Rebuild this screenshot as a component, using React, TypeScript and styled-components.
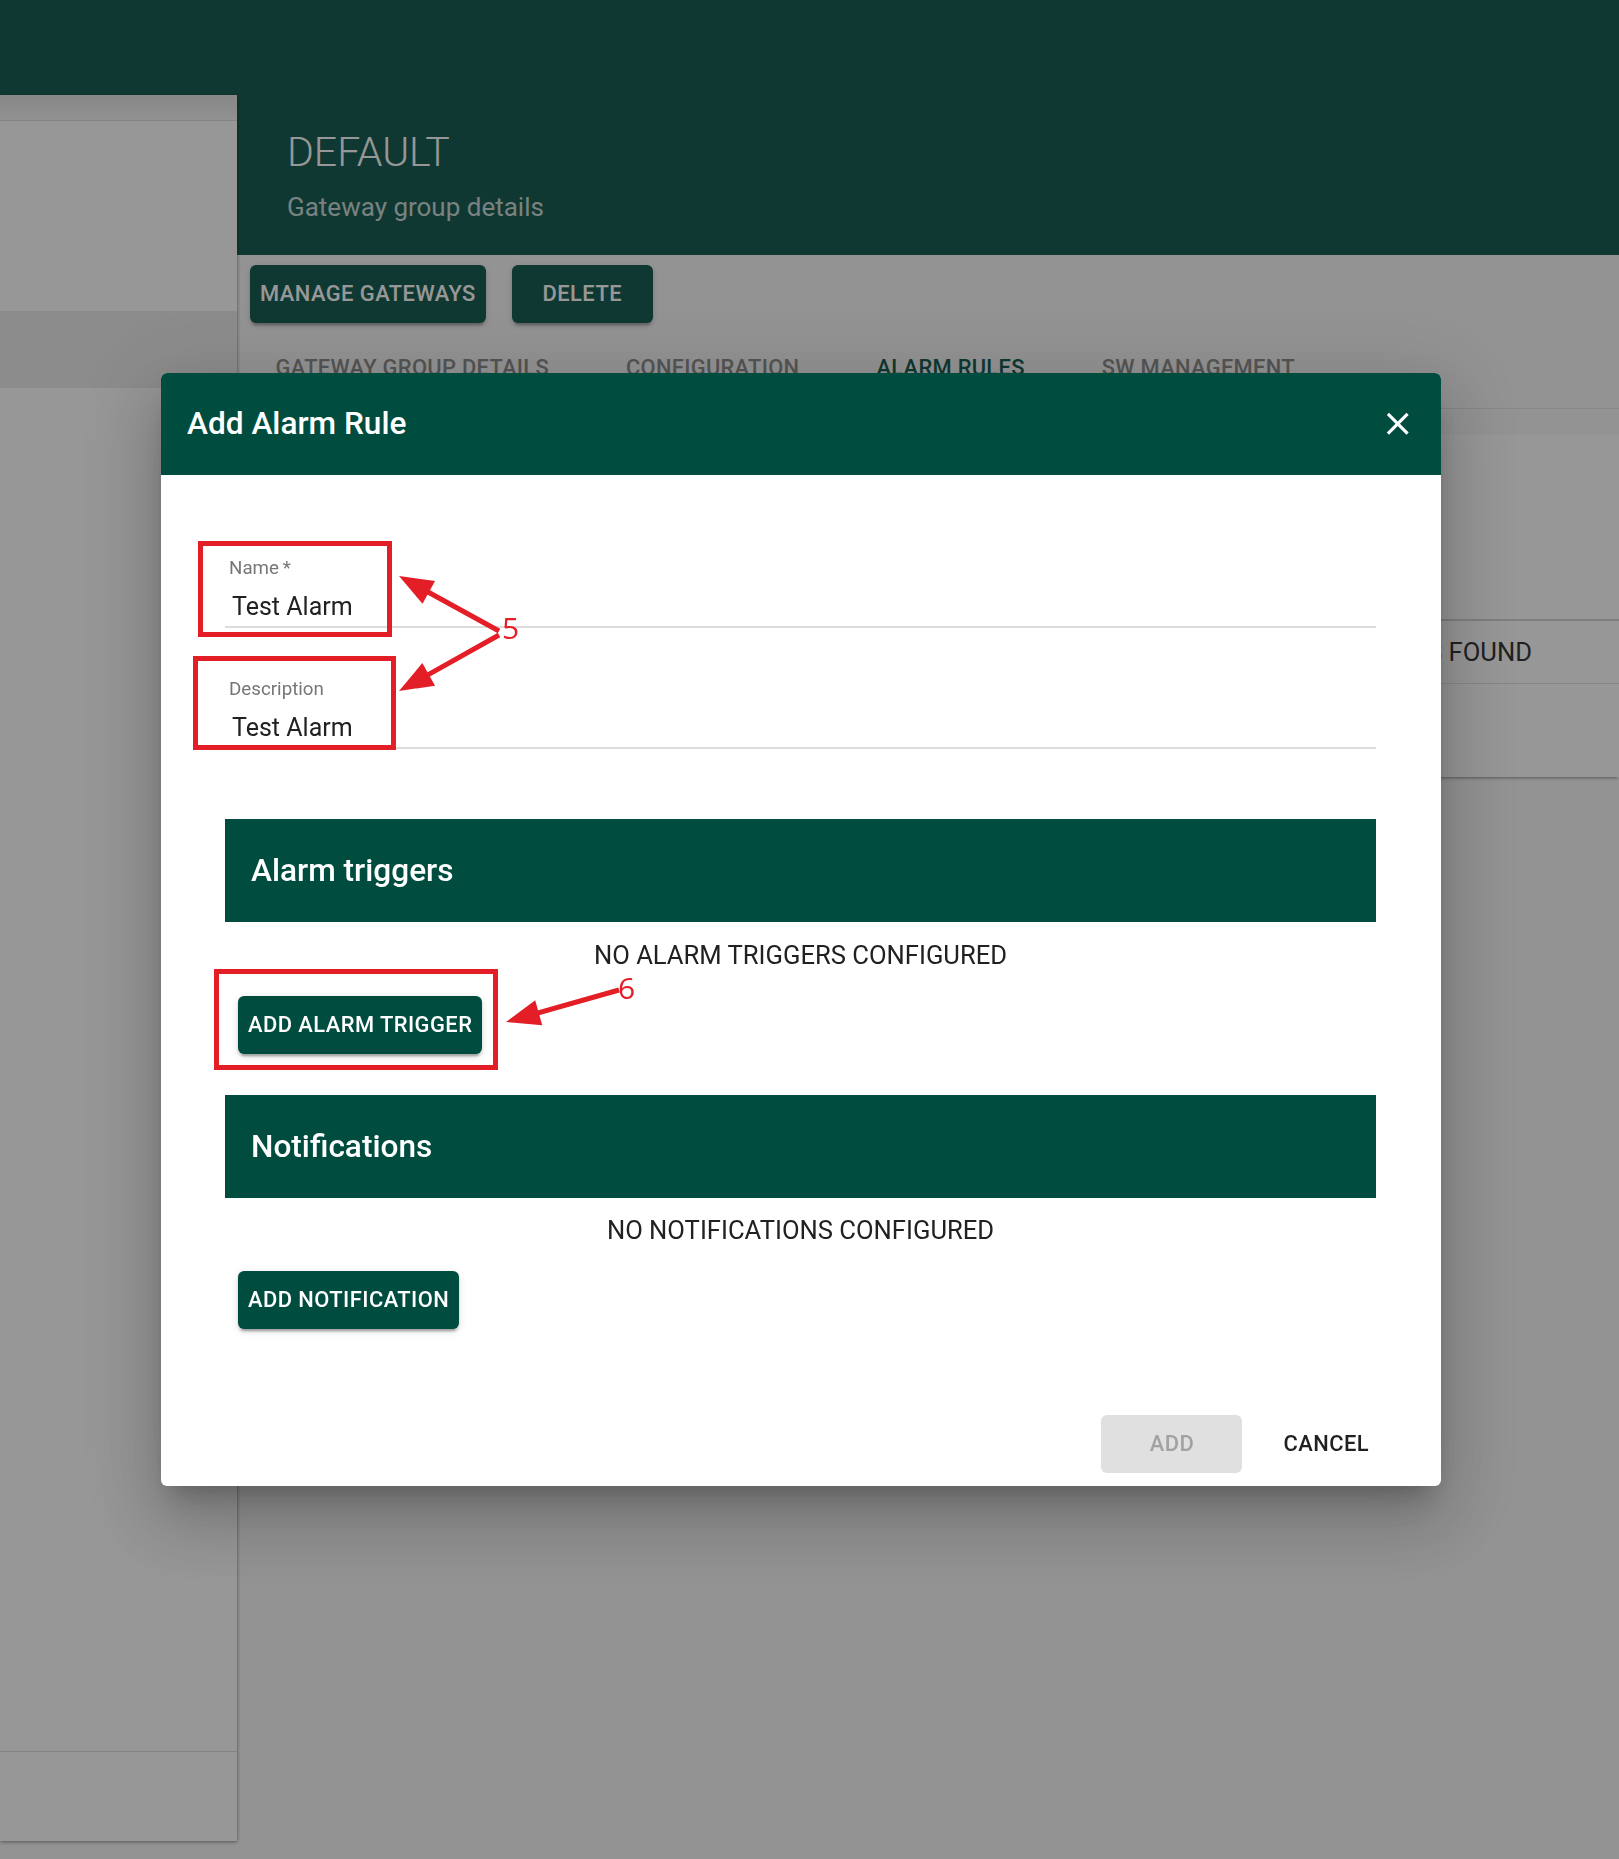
import React from 'react'
import styled, { createGlobalStyle } from 'styled-components'

const GlobalStyle = createGlobalStyle`
  html, body {
    margin: 0;
    padding: 0;
    overflow: hidden;
  }
  body {
    font-family: Roboto, "Liberation Sans", Arial, sans-serif;
    background: #f8f8f8;
    color: #212121;
  }
  * {
    box-sizing: border-box;
  }
`

const GREEN = '#004d40'
const RED = '#e41e26'

const Page = styled.div`
  height: 100vh;
  display: flex;
  flex-direction: column;
`

const AppBar = styled.header`
  height: 95px;
  flex: none;
  background: ${GREEN};
`

const Main = styled.div`
  flex: 1;
  display: flex;
  min-height: 0;
`

const Sidebar = styled.aside`
  width: 237px;
  flex: none;
  height: 1746px;
  background: #fff;
  box-shadow: 1px 0 3px rgba(0, 0, 0, 0.22), 0 2px 3px rgba(0, 0, 0, 0.25);
  display: flex;
  flex-direction: column;
  position: relative;
  z-index: 1;
`

const SideBand = styled.div<{ $h?: number; $tone?: string; $line?: 'top' | 'bottom' }>`
  flex: ${(p) => (p.$h ? 'none' : '1')};
  height: ${(p) => (p.$h ? `${p.$h}px` : 'auto')};
  background: ${(p) => p.$tone || '#fff'};
  ${(p) => (p.$line === 'top' ? 'border-top: 1px solid #d9d9d9;' : '')}
  ${(p) => (p.$line === 'bottom' ? 'border-bottom: 1px solid #dedede;' : '')}
`

const Content = styled.main`
  flex: 1;
  min-width: 0;
  display: flex;
  flex-direction: column;
`

const Hero = styled.div`
  height: 160px;
  background: ${GREEN};
  padding: 32.6px 0 0 50px;
`

const HeroTitle = styled.h1`
  margin: 0;
  font-weight: 300;
  font-size: 41px;
  line-height: 49.2px;
  color: #fff;
`

const HeroSub = styled.p`
  margin: 12.7px 0 0;
  font-size: 26px;
  line-height: 37.5px;
  color: rgba(255, 255, 255, 0.78);
`

const Toolbar = styled.div`
  display: flex;
  gap: 26px;
  padding: 10px 13px 0;
`

const Button = styled.button<{ $kind?: 'contained' | 'disabled' | 'text' }>`
  height: 58px;
  min-width: ${(p) => (p.$kind === 'text' ? '0' : '141px')};
  padding: ${(p) => (p.$kind === 'text' ? '0 25px' : '0 10px')};
  border: 0;
  border-radius: 6px;
  font-family: Roboto, "Liberation Sans", Arial, sans-serif;
  font-weight: 500;
  font-size: 21.9px;
  line-height: 1;
  letter-spacing: 0.45px;
  text-transform: uppercase;
  white-space: nowrap;
  cursor: pointer;
  background: ${(p) =>
    p.$kind === 'disabled' ? '#e0e0e0' : p.$kind === 'text' ? 'transparent' : GREEN};
  color: ${(p) => (p.$kind === 'disabled' ? '#a2a2a2' : p.$kind === 'text' ? '#212121' : '#fff')};
  box-shadow: ${(p) =>
    p.$kind === 'contained' || !p.$kind
      ? '0 5px 2px -3px rgba(0,0,0,0.2), 0 3px 3px 0 rgba(0,0,0,0.14), 0 2px 8px 0 rgba(0,0,0,0.12)'
      : 'none'};
`

const Tabs = styled.nav`
  display: flex;
  height: 75px;
  margin-top: 11px;
  border-bottom: 1px solid #e0e0e0;
`

const Tab = styled.div<{ $active?: boolean }>`
  padding: 18px 38.5px 0;
  font-weight: 500;
  font-size: 21.9px;
  line-height: 32.8px;
  letter-spacing: 0.3px;
  text-transform: uppercase;
  white-space: nowrap;
  color: ${(p) => (p.$active ? GREEN : '#828282')};
  border-bottom: ${(p) => (p.$active ? `3px solid ${GREEN}` : 'none')};
`

const Paper = styled.section`
  margin: 25px 0 0 13px;
  height: 343px;
  background: #fff;
  display: flex;
  flex-direction: column;
  box-shadow: 0 3px 2px -2px rgba(0, 0, 0, 0.3), 0 2px 4px rgba(0, 0, 0, 0.14);
`

const PaperHead = styled.div`
  height: 187px;
  border-bottom: 2px solid #d2d2d2;
`

const EmptyRow = styled.div`
  height: 63px;
  display: flex;
  align-items: center;
  justify-content: flex-end;
  padding-right: 87px;
  font-size: 25.6px;
  color: #212121;
  border-bottom: 1px solid #e0e0e0;
`

/* modal */

const Backdrop = styled.div`
  position: fixed;
  inset: 0;
  background: rgba(33, 33, 33, 0.47);
  display: flex;
  align-items: center;
  justify-content: center;
  padding-right: 17px;
  z-index: 10;
`

const Dialog = styled.div`
  position: relative;
  width: 1280px;
  background: #fff;
  border-radius: 6px;
  display: flex;
  flex-direction: column;
  box-shadow: 0 17px 23px -11px rgba(0, 0, 0, 0.2), 0 37px 59px 5px rgba(0, 0, 0, 0.14),
    0 14px 72px 12px rgba(0, 0, 0, 0.12);
`

const DialogHeader = styled.div`
  height: 102px;
  display: flex;
  align-items: center;
  justify-content: space-between;
  padding: 0 25px 0 26px;
  background: ${GREEN};
  border-radius: 6px 6px 0 0;
`

const DialogTitle = styled.h2`
  margin: 0;
  font-weight: 500;
  font-size: 31.6px;
  line-height: 50px;
  color: #fff;
`

const CloseButton = styled.button`
  width: 37.5px;
  height: 37.5px;
  padding: 0;
  border: 0;
  background: transparent;
  display: flex;
  cursor: pointer;
`

const DialogBody = styled.div`
  padding: 76px 65px 0 64px;
  display: flex;
  flex-direction: column;
`

const Field = styled.label<{ $gap?: number }>`
  display: flex;
  flex-direction: column;
  margin-top: ${(p) => p.$gap || 0}px;
`

const FieldLabel = styled.span`
  padding: 8.4px 0 0 4px;
  margin-bottom: -2.4px;
  font-size: 18.75px;
  line-height: 18.75px;
  color: #777;
`

const FieldInput = styled.input`
  height: 52px;
  padding: 15.5px 0 4.5px 7px;
  border: 0;
  border-bottom: 2px solid #dcdcdc;
  outline: none;
  background: transparent;
  font-family: Roboto, "Liberation Sans", Arial, sans-serif;
  font-size: 25px;
  line-height: 30px;
  color: #212121;
`

const SectionBar = styled.div<{ $gap: number }>`
  margin-top: ${(p) => p.$gap}px;
  height: 103px;
  padding-left: 26px;
  background: ${GREEN};
  font-weight: 500;
  font-size: 31.6px;
  line-height: 103px;
  color: #fff;
`

const EmptyNote = styled.p`
  margin: 14.5px 0 0;
  text-align: center;
  font-size: 25.6px;
  line-height: 37.5px;
  color: #212121;
`

const ButtonRow = styled.div`
  display: flex;
  margin: 21.5px 0 0 13px;
`

const Actions = styled.div`
  display: flex;
  justify-content: flex-end;
  gap: 16px;
  padding: 86px 47px 13px 0;
`

/* annotations drawn over the dialog */

const Callout = styled.div<{ $x: number; $y: number; $w: number; $h: number }>`
  position: absolute;
  left: ${(p) => p.$x}px;
  top: ${(p) => p.$y}px;
  width: ${(p) => p.$w}px;
  height: ${(p) => p.$h}px;
  border: 5px solid ${RED};
  pointer-events: none;
`

const Marker = styled.span<{ $x: number; $y: number }>`
  position: absolute;
  left: ${(p) => p.$x}px;
  top: ${(p) => p.$y}px;
  font-family: "Open Sans", "Liberation Sans", sans-serif;
  font-size: 30px;
  line-height: 30px;
  color: ${RED};
  pointer-events: none;
`

const ArrowLayer = styled.svg`
  position: absolute;
  left: 0;
  top: 0;
  width: 100%;
  height: 100%;
  pointer-events: none;
  overflow: visible;
`

type Pt = [number, number]

const Arrow = ({ from, to }: { from: Pt; to: Pt }) => {
  const dx = to[0] - from[0]
  const dy = to[1] - from[1]
  const len = Math.hypot(dx, dy)
  const ux = dx / len
  const uy = dy / len
  const bx = to[0] - ux * 34
  const by = to[1] - uy * 34
  const nx = -uy * 13
  const ny = ux * 13
  return (
    <g>
      <line x1={from[0]} y1={from[1]} x2={bx + ux * 4} y2={by + uy * 4} stroke={RED} strokeWidth={5} />
      <polygon points={`${to[0]},${to[1]} ${bx + nx},${by + ny} ${bx - nx},${by - ny}`} fill={RED} />
    </g>
  )
}

const CloseIcon = () => (
  <svg width="37.5" height="37.5" viewBox="0 0 24 24">
    <path
      fill="#fff"
      d="M19 6.41L17.59 5 12 10.59 6.41 5 5 6.41 10.59 12 5 17.59 6.41 19 12 13.41 17.59 19 19 17.59 13.41 12z"
    />
  </svg>
)

const tabs = ['Gateway group details', 'Configuration', 'Alarm rules', 'SW management']

export default function App() {
  return (
    <>
      <GlobalStyle />
      <Page>
        <AppBar />
        <Main>
          <Sidebar>
            <SideBand $h={26} $tone="linear-gradient(#e2e2e2, #f3f3f3)" $line="bottom" />
            <SideBand $h={190} />
            <SideBand $h={77} $tone="#ebebeb" />
            <SideBand />
            <SideBand $h={90} $line="top" />
          </Sidebar>
          <Content>
            <Hero>
              <HeroTitle>DEFAULT</HeroTitle>
              <HeroSub>Gateway group details</HeroSub>
            </Hero>
            <Toolbar>
              <Button>Manage gateways</Button>
              <Button>Delete</Button>
            </Toolbar>
            <Tabs>
              {tabs.map((t) => (
                <Tab key={t} $active={t === 'Alarm rules'}>
                  {t}
                </Tab>
              ))}
            </Tabs>
            <Paper>
              <PaperHead />
              <EmptyRow>NO ALARM RULES FOUND</EmptyRow>
            </Paper>
          </Content>
        </Main>
      </Page>

      <Backdrop>
        <Dialog>
          <DialogHeader>
            <DialogTitle>Add Alarm Rule</DialogTitle>
            <CloseButton aria-label="close">
              <CloseIcon />
            </CloseButton>
          </DialogHeader>

          <DialogBody>
            <Field>
              <FieldLabel>Name&thinsp;*</FieldLabel>
              <FieldInput readOnly defaultValue="Test Alarm" />
            </Field>
            <Field $gap={44}>
              <FieldLabel>Description</FieldLabel>
              <FieldInput readOnly defaultValue="Test Alarm" />
            </Field>

            <SectionBar $gap={70.5}>Alarm triggers</SectionBar>
            <EmptyNote>NO ALARM TRIGGERS CONFIGURED</EmptyNote>
            <ButtonRow>
              <Button>Add alarm trigger</Button>
            </ButtonRow>

            <SectionBar $gap={41}>Notifications</SectionBar>
            <EmptyNote>NO NOTIFICATIONS CONFIGURED</EmptyNote>
            <ButtonRow>
              <Button>Add notification</Button>
            </ButtonRow>
          </DialogBody>

          <Actions>
            <Button $kind="disabled">Add</Button>
            <Button $kind="text">Cancel</Button>
          </Actions>

          <Callout $x={37} $y={168} $w={194} $h={96} />
          <Callout $x={32} $y={283} $w={203} $h={94} />
          <Callout $x={53} $y={596} $w={284} $h={101} />
          <ArrowLayer>
            <Arrow from={[338, 258]} to={[238, 203]} />
            <Arrow from={[338, 262]} to={[238, 318]} />
            <Arrow from={[458, 617]} to={[345, 649]} />
          </ArrowLayer>
          <Marker $x={341} $y={240}>5</Marker>
          <Marker $x={457} $y={600}>6</Marker>
        </Dialog>
      </Backdrop>
    </>
  )
}
